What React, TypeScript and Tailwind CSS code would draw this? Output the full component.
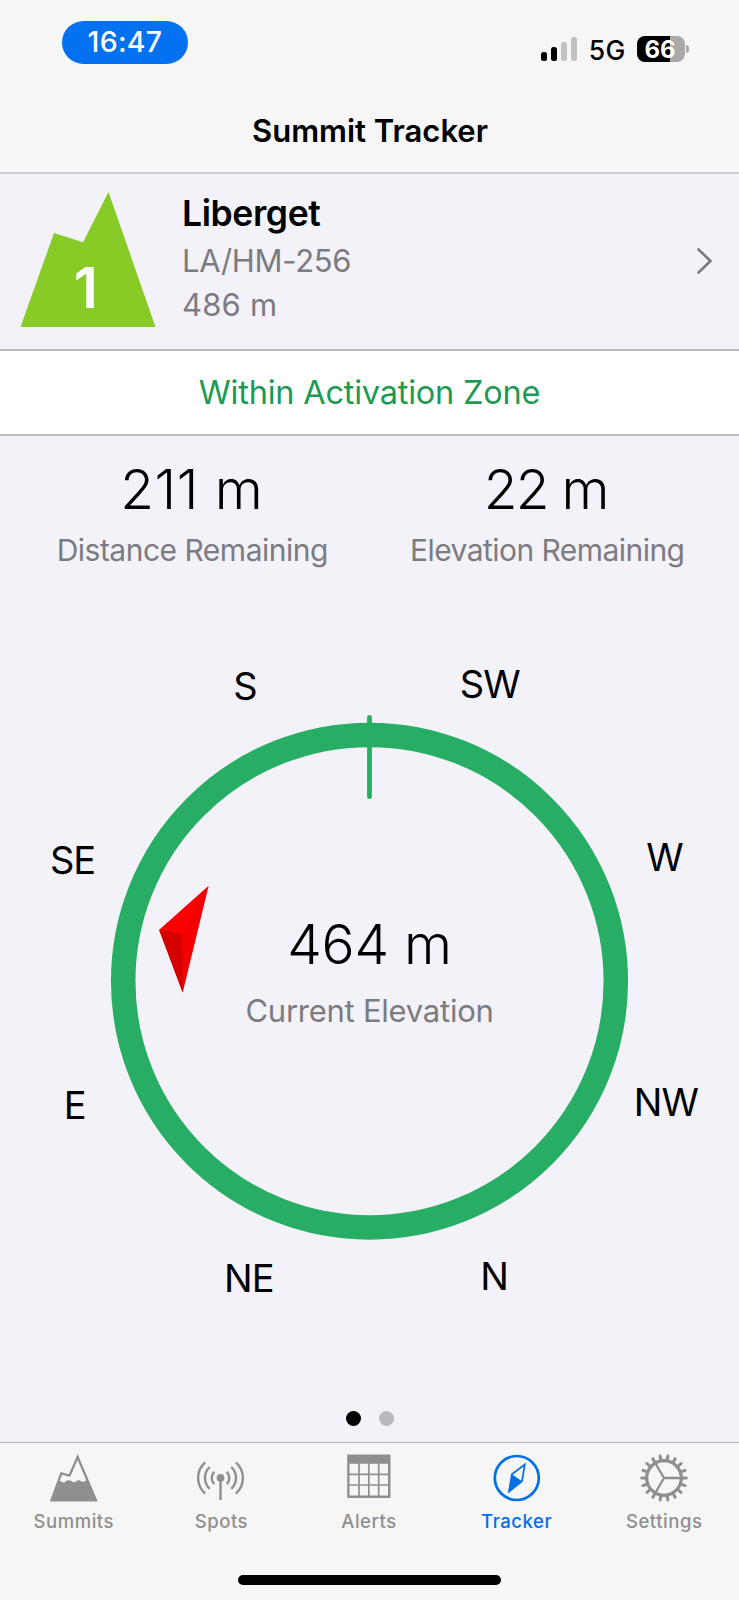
import React from 'react';

const directions = [
  { label: 'S', x: 245, y: 129.5 },
  { label: 'SW', x: 489.7, y: 128 },
  { label: 'W', x: 664.5, y: 300.7 },
  { label: 'NW', x: 665.8, y: 545.5 },
  { label: 'N', x: 494, y: 720 },
  { label: 'NE', x: 248.8, y: 721.7 },
  { label: 'E', x: 74.7, y: 549.3 },
  { label: 'SE', x: 72.5, y: 304.2 },
];

const signalBars = ['h-[9px] bg-black', 'h-[14px] bg-black', 'h-[19px] bg-[#c2c2c2]', 'h-[24px] bg-[#c2c2c2]'];

function StatusBar() {
  return (
    <div className="flex h-[84px] items-start justify-between pt-[20.5px] pr-[50px] pl-[62px]">
      <div className="flex h-[43px] w-[126px] items-center justify-center rounded-full bg-[#0472f0] pt-px text-[28.5px] leading-none font-[450] tracking-[0.3px] text-white">
        16:47
      </div>
      <div className="flex pt-[15.5px]">
        <div className="mt-px flex h-6 items-end gap-1">
          {signalBars.map((bar) => (
            <span key={bar} className={`w-1.5 rounded-[2.5px] ${bar}`} />
          ))}
        </div>
        <span className="mt-px ml-3 text-[26.5px] leading-[26px] font-[450] tracking-[0.3px]">5G</span>
        <div className="ml-[11.5px] flex h-[26px] w-12 items-center justify-center rounded-[8px] bg-[linear-gradient(90deg,#000_68%,#a9a9a9_68%)] pt-px pr-[2px] text-[24px] leading-none font-bold text-white">
          66
        </div>
        <span className="mt-[9px] ml-px h-2 w-[3px] rounded-r-full bg-[#a9a9a9]" />
      </div>
    </div>
  );
}

function Header() {
  return (
    <header className="h-[174px] border-b-2 border-[#cfcfd1] bg-[#f6f6f6]">
      <StatusBar />
      <h1 className="pt-[27px] pl-px text-center text-[31px] leading-[40px] font-semibold">Summit Tracker</h1>
    </header>
  );
}

function SummitRow() {
  return (
    <section className="flex h-[177px] items-start border-b-2 border-[#bbbbc0] pl-5">
      <svg width="136" height="136" viewBox="0 0 136 136" className="mt-[18px]">
        <path d="M88.500 0 135.500 135H.500L34 41 63 50.300Z" fill="#88ca26" />
        <text x="65.800" y="116" textAnchor="middle" fontSize="57" fontWeight="560" fill="#fff">1</text>
      </svg>
      <div className="ml-[26px] grow pt-[15px] text-[31px] text-[#7c7b81]">
        <h2 className="text-[35.5px] leading-[50px] font-semibold tracking-[-0.4px] text-black">Liberget</h2>
        <p className="-mt-px leading-[45px] font-[380] tracking-[-0.3px]">LA/HM-256</p>
        <p className="leading-[44px] font-[380] tracking-[0.2px]">486 m</p>
      </div>
      <svg width="18" height="30" viewBox="0 0 18 30" className="mt-[72px] mr-[26px]">
        <path d="M3.500 3.500 15.500 15 3.500 26.500" fill="none" stroke="#7b7a80" strokeWidth="2.600" strokeLinecap="round" strokeLinejoin="round" />
      </svg>
    </section>
  );
}

function Metric({ value, label, valueClass, labelClass }) {
  return (
    <div className="flex flex-1 flex-col items-center gap-[11px] whitespace-nowrap">
      <span className={`text-[55px] leading-[60px] font-[320] ${valueClass}`}>{value}</span>
      <span className={`text-[30px] leading-[40px] font-[380] text-[#7c7b81] ${labelClass}`}>{label}</span>
    </div>
  );
}

function Compass() {
  return (
    <div className="relative h-[820px]">
      <svg width="739" height="820" viewBox="0 0 739 820">
        <circle cx="369.500" cy="411.200" r="246.300" fill="none" stroke="#28ad64" strokeWidth="24.500" />
        <path d="M369.500 147.300V226.700" stroke="#28ad64" strokeWidth="4.800" strokeLinecap="round" />
        {/* bearing needle */}
        <path d="M208.600 316 159.200 360 182.700 422.500Z" fill="#f20000" />
        <path d="M208.600 316 159.200 360 182 364.500Z" fill="#fc0000" />
        <path d="M159.200 360 182 364.500 182.700 422.500Z" fill="#d40000" />
        {directions.map((d) => (
          <text key={d.label} x={d.x} y={d.y} textAnchor="middle" fontSize="38" letterSpacing="-1">
            {d.label}
          </text>
        ))}
      </svg>
      {/* reading inside the ring */}
      <div className="absolute inset-x-0 top-[344px] flex flex-col items-center whitespace-nowrap">
        <span className="text-[55px] leading-[60px] font-[320] tracking-[-0.2px]">464 m</span>
        <span className="mt-[17px] text-[31px] leading-[40px] font-[380] tracking-[-0.25px] text-[#7c7b81]">Current Elevation</span>
      </div>
    </div>
  );
}

function SummitsIcon() {
  return (
    <svg width="48" height="48" viewBox="0 0 48 48">
      <path d="M27.600 3 46 46.300H1.500L11.300 19.400 19.500 21.700Z" fill="none" stroke="currentColor" strokeWidth="2.300" />
      <path d="M9 26.500 14 28.800 17 26.200 20.500 26.500 24 28.500 28.500 26 33 28 37.500 26 46 46H2Z" fill="currentColor" />
    </svg>
  );
}

function SpotsIcon() {
  return (
    <svg width="48" height="48" viewBox="0 0 48 48" fill="none" stroke="currentColor" strokeWidth="2.400">
      <circle cx="23.500" cy="23.800" r="3.900" fill="currentColor" stroke="none" />
      <path d="M23.500 24V46" />
      <path d="M8.200 8.300A20.700 20.700 0 0 0 8.200 39.500M12.700 13A15 15 0 0 0 12.700 34.800M17.300 17.800A8.500 8.500 0 0 0 17.300 30" />
      <path d="M38.800 8.300A20.700 20.700 0 0 1 38.800 39.500M34.300 13A15 15 0 0 1 34.300 34.800M29.700 17.800A8.500 8.500 0 0 1 29.700 30" />
    </svg>
  );
}

function AlertsIcon() {
  return (
    <svg width="48" height="48" viewBox="0 0 48 48">
      <path d="M2.200.500H45.500V44H2.200Z" fill="currentColor" />
      <path d="M4.500 9.800H43V41.500H4.500Z" fill="#f6f6f6" />
      <path d="M14 9V42M23.800 9V42M33.700 9V42M4 20.300H44M4 31H44" stroke="currentColor" strokeWidth="1.700" />
    </svg>
  );
}

function TrackerIcon() {
  return (
    <svg width="48" height="48" viewBox="0 0 48 48">
      <circle cx="23.800" cy="24" r="22" fill="none" stroke="currentColor" strokeWidth="2.700" />
      <path d="M31.800 10.500 29 27.200 16 37.500 18.900 20.300Z" fill="none" stroke="currentColor" strokeWidth="1.700" />
      <path d="M18.900 20.300 29 27.200 15.300 38.500Z" fill="currentColor" />
    </svg>
  );
}

function SettingsIcon() {
  const teeth = Array.from({ length: 18 }, (_, i) => i * 20);
  return (
    <svg width="48" height="48" viewBox="0 0 48 48" fill="none" stroke="currentColor">
      <circle cx="24" cy="24" r="17.300" strokeWidth="3.200" />
      <path d="M24 24H41M24 24 15.200 9M24 24 15.200 39" strokeWidth="2.300" />
      {teeth.map((a) => (
        <path key={a} d="M18 0 22.300 0" strokeWidth="3" strokeLinecap="round" transform={`translate(24 24) rotate(${a})`} />
      ))}
    </svg>
  );
}

const tabs = [
  { name: 'Summits', icon: <SummitsIcon /> },
  { name: 'Spots', icon: <SpotsIcon /> },
  { name: 'Alerts', icon: <AlertsIcon /> },
  { name: 'Tracker', icon: <TrackerIcon />, active: true },
  { name: 'Settings', icon: <SettingsIcon /> },
];

function TabBar() {
  return (
    <nav className="flex h-[158px] flex-col items-center border-t border-[#b3b3b8] bg-[#f6f6f6] pt-[11px]">
      <div className="grid w-full grid-cols-5 pr-px">
        {tabs.map((tab) => (
          <div key={tab.name} className={`flex flex-col items-center ${tab.active ? 'text-[#0470e6]' : 'text-[#8f8f8f]'}`}>
            {tab.icon}
            <span className="mt-[7px] text-[18.5px] leading-6 font-medium tracking-[0.55px]">{tab.name}</span>
          </div>
        ))}
      </div>
      <div className="mt-[42px] h-[9.5px] w-[263px] rounded-full bg-black" />
    </nav>
  );
}

export default function App() {
  return (
    <div className="flex h-[1600px] w-[739px] flex-col overflow-hidden bg-[#f3f2f9] font-['Inter',sans-serif] text-black">
      <Header />
      <SummitRow />
      <div className="h-[85px] border-b-2 border-[#bbbbc0] bg-white text-center text-[32.5px] leading-[84px] font-[380] tracking-[-0.22px] text-[#1c9a54]">
        Within Activation Zone
      </div>
      <section className="flex h-[134px] px-3.5 pt-[23px]">
        <Metric value="211 m" label="Distance Remaining" valueClass="tracking-[0.5px]" labelClass="pl-px tracking-[-0.5px]" />
        <Metric value="22 m" label="Elevation Remaining" valueClass="pr-[3px] tracking-[-1.8px]" labelClass="tracking-[-0.55px]" />
      </section>
      <Compass />
      <div className="flex h-[52px] items-center justify-center gap-[18px] pt-1">
        <span className="size-[15px] rounded-full bg-black" />
        <span className="size-[15px] rounded-full bg-[#bab9be]" />
      </div>
      <TabBar />
    </div>
  );
}
